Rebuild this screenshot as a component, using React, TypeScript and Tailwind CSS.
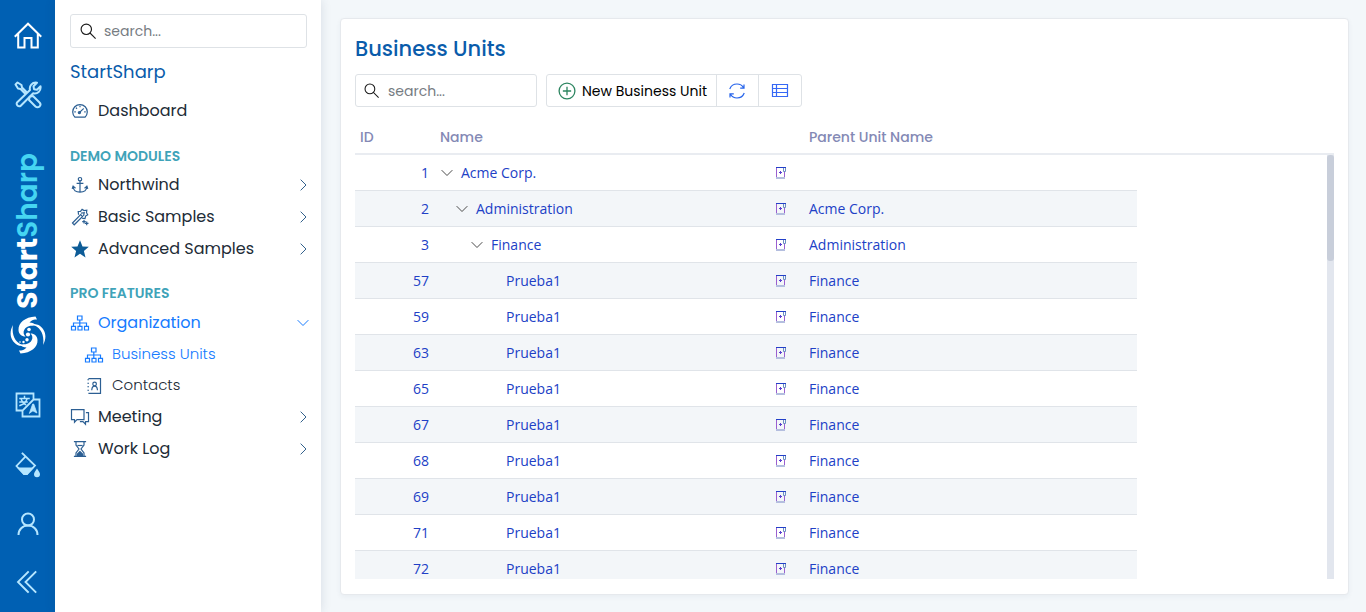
import type { ReactNode } from "react";

const line = {
  fill: "none",
  stroke: "currentColor",
  strokeLinecap: "square" as const,
  strokeLinejoin: "miter" as const,
};

type IconProps = { className?: string };

function HomeIcon({ className }: IconProps) {
  return (
    <svg viewBox="0 0 28 28" className={className} {...line} strokeWidth="2" aria-hidden="true">
      <path d="M1.5 15 14 2.700l12.500 12.300M4.200 13V26.500h6.300v-9.500h7v9.500h6.300V13" />
    </svg>
  );
}

function ToolsIcon({ className }: IconProps) {
  return (
    <svg viewBox="0 0 28 28" className={className} {...line} strokeWidth="2" strokeLinejoin="round" aria-hidden="true">
      <path d="M1.5 3.5 3.5 1.5 7.5 4 8 6.500 12.500 11 11 12.500 6.500 8 4 7.500z" />
      <path d="M16.500 15.500 19 15l6.500 6.500a2.700 2.700 0 0 1-4 4L15 19l.5-2.500" />
      <path d="M3 21.500 16 9c-1-4 2-8 7-7.300L19.500 5.200l.5 3 3 .5 3.500-3.500c.8 5-3.200 8-7.300 7L6.500 25A2.600 2.600 0 0 1 3 21.500z" />
    </svg>
  );
}

function TranslateIcon({ className }: IconProps) {
  return (
    <svg viewBox="0 0 26 26" className={className} {...line} strokeWidth="1.800" aria-hidden="true">
      <path d="M7.500 18.500H1.500v-17h17v6M18.500 7.500h6v17h-17v-6l11-11z" />
      <path d="M5 6.500h9M9.500 4.500v2M12 7c-1 3-3 5-7 6.500M6.500 8c1 2.500 2 3.500 4 4.500M5 10h7" strokeWidth="1.500" />
      <path d="m14.500 21 3.200-9h1l3.200 9-3.700-2z" fill="currentColor" strokeWidth=".8" />
    </svg>
  );
}

function PaintIcon({ className }: IconProps) {
  return (
    <svg viewBox="0 0 26 26" className={className} {...line} strokeWidth="1.800" aria-hidden="true">
      <path d="m7.500 1.500 12.500 12-8 8.500h-3L1.500 14 10.500 4.500" />
      <path d="M2 15.500h17l-7 7.500H9z" fill="currentColor" stroke="none" />
      <path d="M22 16.500c-2 3-3 4.300-3 5.800a3 3 0 0 0 6 0c0-1.500-1-2.800-3-5.800z" fill="currentColor" stroke="none" />
    </svg>
  );
}

function PersonIcon({ className }: IconProps) {
  return (
    <svg viewBox="0 0 24 24" className={className} {...line} strokeWidth="2" strokeLinecap="butt" aria-hidden="true">
      <circle cx="12" cy="7.500" r="6" />
      <path d="M2.500 23c0-5.500 4-9.500 9.500-9.500s9.500 4 9.500 9.500" />
    </svg>
  );
}

function CollapseIcon({ className }: IconProps) {
  return (
    <svg viewBox="0 0 24 24" className={className} {...line} strokeWidth="1.900" aria-hidden="true">
      <path d="M12 2 2 12l10 10M19.500 2l-10 10 10 10" />
    </svg>
  );
}

function SwirlLogo({ className }: IconProps) {
  return (
    <svg viewBox="0 0 36 38" className={className} fill="currentColor" aria-hidden="true">
      <path d="M25.500.5C15 1 8 7 8.500 14c.2 4 3 6.500 7 6.500-2-2-2.600-4.500-1-7C16.500 10 20 9.500 26.500 9.500c-2-2-4.500-3-7-3C21.500 4 24 3.500 27 3.500z" />
      <path d="M10.500 37.500c10.500-.5 17.500-6.500 17-13.500-.2-4-3-6.500-7-6.500 2 2 2.600 4.500 1 7-2 3.500-5.500 4-12 4 2 2 4.500 3 7 3-2 2.500-4.500 3-7.500 3z" />
      <path d="M3 9C-1.500 17 .5 25 7.500 29c2 1 4 1 6 .5C6 27 1.200 20 3 9zM33 29c4.500-8 2.500-16-4.500-20-2-1-4-1-6-.5C30 11 34.800 18 33 29z" />
      <circle cx="18" cy="18.500" r="2.100" />
      <circle cx="19" cy="13.500" r="1.800" />
      <circle cx="17" cy="23.800" r="1.700" />
      <circle cx="13.500" cy="26" r="1.200" />
      <circle cx="10" cy="26" r=".8" />
    </svg>
  );
}

function SearchIcon({ className }: IconProps) {
  return (
    <svg viewBox="0 0 16 16" className={className} {...line} strokeWidth="1.150" aria-hidden="true">
      <circle cx="6.300" cy="6.300" r="5.200" />
      <path d="m10.200 10.200 5 5" />
    </svg>
  );
}

function GaugeIcon() {
  return (
    <svg viewBox="0 0 18 18" className="size-[18px]" {...line} strokeWidth="1.200" aria-hidden="true">
      <path d="M4 15.200A7.300 7.300 0 1 1 14 15.200z" />
      <path d="m8.500 10.500 3.800-3.600M9 4.300v.4M5.300 6l.3.300M3.900 9.800h.3M13.800 9.800h.3" />
      <circle cx="8.400" cy="10.600" r="1.100" />
    </svg>
  );
}

function AnchorIcon() {
  return (
    <svg viewBox="0 0 18 18" className="size-[18px]" {...line} strokeWidth="1.200" aria-hidden="true">
      <circle cx="9" cy="3.200" r="1.700" />
      <path d="M9 5v11M6.200 7.400h5.600M2 10.500c.4 3.500 3 5.700 7 5.700s6.600-2.200 7-5.700M1.400 12.300 2.100 10.300l1.900 1.500M16.600 12.300l-.7-2-1.900 1.500" />
    </svg>
  );
}

function WandIcon() {
  return (
    <svg viewBox="0 0 18 18" className="size-[18px]" {...line} strokeWidth="1.200" aria-hidden="true">
      <path d="m1.500 15 8.200-8.400 1.900 1.900L3.200 16.800z" />
      <path d="M7.500 6.200 7.200 3.500l2.300-.2 1.600-1.900 2 1.200 2.700-.4-.3 2.500 1.200 2-2.100 1.400-.6 2.400-2.300-.2M10.500 5l2.700-.4-.5 2.800" />
      <path d="M13 12.500v2.400M11.800 13.700h2.400M15.700 14.200v2.400M14.500 15.400h2.400" />
    </svg>
  );
}

function StarIcon() {
  return (
    <svg viewBox="0 0 18 18" className="size-[18px]" fill="#0d5c97" aria-hidden="true">
      <path d="m9 .3 2.500 6.100 6.300.4-4.900 4.100 1.600 6.500L9 13.800l-5.500 3.600 1.600-6.500L.2 6.800l6.300-.4z" />
    </svg>
  );
}

function OrgIcon() {
  return (
    <svg viewBox="0 0 20 18" className="h-[18px] w-5" {...line} strokeWidth="1.200" aria-hidden="true">
      <path d="M7.500 2h4.500v4H7.500zM1.500 12.300h4v3.700h-4zM8 12.300h4v3.700H8zM14.500 12.300h4v3.700h-4zM9.800 6v6M3.500 12V9h13v3" />
    </svg>
  );
}

function ContactsIcon() {
  return (
    <svg viewBox="0 0 18 18" className="size-[18px]" {...line} strokeWidth="1.200" aria-hidden="true">
      <path d="M4 1.700h11.500v14.600H4" />
      <path d="M3.200 2.200v14" strokeDasharray="1 2.500" strokeWidth="1.600" strokeLinecap="butt" />
      <circle cx="9.600" cy="7" r="1.800" />
      <path d="M6.800 12.700c.2-2.400 1.200-3.600 2.800-3.600s2.600 1.200 2.800 3.600" />
    </svg>
  );
}

function ChatIcon() {
  return (
    <svg viewBox="0 0 20 18" className="h-[18px] w-5" {...line} strokeWidth="1.200" aria-hidden="true">
      <path d="M1.500 1.700h12.500v10H7l-2.500 2.500v-2.500h-3zM16.500 4.700h2v9h-3v2.500L13 13.700h-2.500" />
    </svg>
  );
}

function HourglassIcon() {
  return (
    <svg viewBox="0 0 18 18" className="size-[18px]" {...line} strokeWidth="1.200" aria-hidden="true">
      <path d="M3.500 1.600h11M3.500 16.400h11M5 2v3l3 4-3 4v3M13 2v3l-3 4 3 4v3" />
      <path d="M9 11.500 6.500 14v2h5v-2z" fill="currentColor" />
      <path d="M7 5.500h4" />
    </svg>
  );
}

function ChevronRight() {
  return (
    <svg viewBox="0 0 12 12" className="size-3 text-[#33618c]" {...line} strokeWidth="1" aria-hidden="true">
      <path d="m4 1 5 5-5 5" />
    </svg>
  );
}

function ChevronDown({ className }: IconProps) {
  return (
    <svg viewBox="0 0 12 12" className={className} {...line} strokeWidth="1" aria-hidden="true">
      <path d="m1 3.500 5 5 5-5" />
    </svg>
  );
}

function PlusCircleIcon() {
  return (
    <svg viewBox="0 0 18 18" className="size-[18px] text-[#2c8560]" {...line} strokeWidth="1.300" aria-hidden="true">
      <circle cx="9" cy="9" r="7.900" />
      <path d="M9 5.500v7M5.500 9h7" />
    </svg>
  );
}

function RefreshIcon() {
  return (
    <svg viewBox="0 0 18 18" className="size-[18px] text-[#2563eb]" {...line} strokeWidth="1.200" aria-hidden="true">
      <path d="M2 6.500C3.200 3.500 5.800 2 9 2c2.800 0 5.200 1.300 6.600 3.700M16 3v3.200h-3.200M16 11.500c-1.200 3-3.800 4.500-7 4.500-2.800 0-5.200-1.300-6.600-3.700M2 15v-3.200h3.200" />
    </svg>
  );
}

function TableIcon() {
  return (
    <svg viewBox="0 0 18 16" className="h-4 w-[18px] text-[#3568f5]" {...line} strokeWidth="1.200" aria-hidden="true">
      <path d="M1.500 1.500h15v12h-15zM1.500 5.500h15M1.500 9.500h15M5.500 1.500v12" />
    </svg>
  );
}

function AddChildIcon() {
  return (
    <svg viewBox="0 0 12 14" className="h-[14px] w-3" fill="none" strokeWidth="1" aria-hidden="true">
      <path d="M1.500 1.500v11M9.500 5v7.500" stroke="#9a5fd0" />
      <path d="M1 1.500h10" stroke="#2340c8" />
      <path d="M8.500 2v3.500h2V2" stroke="#6d8fc4" />
      <path d="M1 12h9" stroke="#b4bedf" strokeWidth="2" />
      <path d="M5.500 5v3M4 6.500h3" stroke="#5a3fd0" />
    </svg>
  );
}

type NavItemProps = {
  icon: ReactNode;
  label: string;
  arrow?: boolean;
  active?: boolean;
};

function NavItem({ icon, label, arrow, active }: NavItemProps) {
  return (
    <a
      href="#"
      className={`-mr-[2px] flex h-8 items-center gap-2 text-base ${active ? "text-[#167bff]" : "text-[#212b36]"}`}
    >
      <span className={`flex w-5 justify-center ${active ? "" : "text-[#2c5f93]"}`}>{icon}</span>
      <span className="flex-1 whitespace-nowrap">{label}</span>
      {arrow && (active ? <ChevronDown className="size-3" /> : <ChevronRight />)}
    </a>
  );
}

function SubItem({ icon, label, active }: NavItemProps) {
  return (
    <a
      href="#"
      className={`flex h-[31px] items-center gap-2 pl-[14px] text-[15px] font-light ${active ? "text-[#167bff]" : "text-[#212b36]"}`}
    >
      <span className={`flex w-5 justify-center ${active ? "" : "text-[#2c5f93]"}`}>{icon}</span>
      <span>{label}</span>
    </a>
  );
}

function Rail() {
  return (
    <nav
      aria-label="Main"
      className="flex w-[55px] shrink-0 flex-col items-center justify-between bg-[#0060b3] pt-[21px] pb-[18px] text-[#b5e6ff]"
    >
      <div className="flex flex-col items-center gap-8">
        <a href="#" aria-label="Home" className="text-white"><HomeIcon className="size-7" /></a>
        <a href="#" aria-label="Tools"><ToolsIcon className="size-7" /></a>
      </div>
      <a href="#" className="flex flex-col items-center gap-[7px] pt-[6px] text-white">
        <span className="rotate-180 text-[28px] leading-9 font-bold [writing-mode:vertical-rl]">
          Start<span className="font-semibold text-[#45d5f2]">Sharp</span>
        </span>
        <SwirlLogo className="h-[38px] w-9" />
      </a>
      <div className="flex flex-col items-center gap-[34px]">
        <button type="button" aria-label="Language"><TranslateIcon className="size-[26px]" /></button>
        <button type="button" aria-label="Theme"><PaintIcon className="size-[26px]" /></button>
        <button type="button" aria-label="Account"><PersonIcon className="size-6" /></button>
        <button type="button" aria-label="Collapse"><CollapseIcon className="size-6" /></button>
      </div>
    </nav>
  );
}

function Sidebar() {
  return (
    <aside className="z-10 flex w-[266px] shrink-0 flex-col bg-white pt-[14px] pr-[14px] pl-[15px] shadow-[0_0_10px_rgba(40,60,90,0.14)]">
      <label className="flex h-[34px] items-center gap-2 rounded-[3px] border border-[#dee2e6] px-[9px]">
        <SearchIcon className="size-4 shrink-0 text-[#1b1b1b]" />
        <input
          type="search"
          aria-label="Search menu"
          placeholder="search..."
          className="min-w-0 flex-1 text-sm outline-none placeholder:text-[#767c82]"
        />
      </label>
      <h2 className="mt-3 text-lg leading-6 text-[#0a5cab]">StartSharp</h2>
      <div className="mt-[11px]">
        <NavItem icon={<GaugeIcon />} label="Dashboard" />
      </div>
      <h3 className="mt-[19px] text-sm leading-5 font-semibold text-[#3fa3b9]">DEMO MODULES</h3>
      <div className="mt-[3px]">
        <NavItem icon={<AnchorIcon />} label="Northwind" arrow />
        <NavItem icon={<WandIcon />} label="Basic Samples" arrow />
        <NavItem icon={<StarIcon />} label="Advanced Samples" arrow />
      </div>
      <h3 className="mt-[18px] text-sm leading-5 font-semibold text-[#3fa3b9]">PRO FEATURES</h3>
      <div className="mt-1">
        <NavItem icon={<OrgIcon />} label="Organization" arrow active />
        <SubItem icon={<OrgIcon />} label="Business Units" active />
        <SubItem icon={<ContactsIcon />} label="Contacts" />
        <NavItem icon={<ChatIcon />} label="Meeting" arrow />
        <NavItem icon={<HourglassIcon />} label="Work Log" arrow />
      </div>
    </aside>
  );
}

type Unit = { id: number; name: string; parent: string; level: number; open?: boolean };

const units: Unit[] = [
  { id: 1, name: "Acme Corp.", parent: "", level: 0, open: true },
  { id: 2, name: "Administration", parent: "Acme Corp.", level: 1, open: true },
  { id: 3, name: "Finance", parent: "Administration", level: 2, open: true },
  ...[57, 59, 63, 65, 67, 68, 69, 71, 72].map((id) => ({ id, name: "Prueba1", parent: "Finance", level: 3 })),
];

const indents = ["pl-[6px]", "pl-[21px]", "pl-9", "pl-[51px]"];

function UnitsTable() {
  return (
    <div className="relative mt-[14px] min-h-0 flex-1 overflow-hidden">
      <table className="w-full table-fixed border-separate border-spacing-0 text-left">
        <colgroup>
          <col className="w-20" />
          <col className="w-[335px]" />
          <col className="w-[34px]" />
          <col className="w-[333px]" />
          <col />
        </colgroup>
        <thead>
          <tr className="h-[34px] text-sm leading-5 text-[#8489b5] [&>th]:border-b-2 [&>th]:border-[#e9ecf1] [&>th]:px-[5px] [&>th]:font-medium">
            <th scope="col">ID</th>
            <th scope="col" colSpan={2}>Name</th>
            <th scope="col">Parent Unit Name</th>
            <td className="border-b-2 border-[#e9ecf1]" />
          </tr>
        </thead>
        <tbody className="font-['Open_Sans',sans-serif] text-sm text-[#213fc6]">
          {units.map((u) => (
            <tr
              key={u.id}
              className="h-9 [&>td]:border-[#e0e4e9] [&>td:not(:last-child)]:border-b even:[&>td:not(:last-child)]:bg-[#f3f6f9]"
            >
              <td className="pr-[6px] text-right"><a href="#">{u.id}</a></td>
              <td className={indents[u.level]}>
                <div className="flex items-center gap-2">
                  <span className="flex w-3">
                    {u.open && (
                      <button type="button" aria-label={`Collapse ${u.name}`}>
                        <ChevronDown className="size-3 text-[#4a4a4a]" />
                      </button>
                    )}
                  </span>
                  <a href="#">{u.name}</a>
                </div>
              </td>
              <td className="pl-[5px]">
                <button type="button" aria-label={`Add unit under ${u.name}`} className="block">
                  <AddChildIcon />
                </button>
              </td>
              <td className="pl-[5px]"><a href="#">{u.parent}</a></td>
              <td />
            </tr>
          ))}
        </tbody>
      </table>
      <div className="absolute top-[34px] right-0 bottom-0 w-[7px] bg-[#e2e6ee]">
        <div className="h-1/4 rounded-[3px] bg-[#c8ceda]" />
      </div>
    </div>
  );
}

export default function App() {
  return (
    <div className="flex h-screen overflow-hidden bg-[#f3f7fa] font-[Poppins,Inter,sans-serif]">
      <Rail />
      <Sidebar />
      <main className="flex min-w-0 flex-1 py-[18px] pr-[17px] pb-[17px] pl-[19px]">
        <section className="flex min-w-0 flex-1 flex-col rounded-[4px] border border-[#e6e9ed] bg-white px-[14px] pt-[14px] pb-[15px] shadow-[0_2px_5px_rgba(40,60,90,0.05)]">
          <h1 className="text-[21px] leading-8 font-medium text-[#0a5cab]">Business Units</h1>
          <div className="mt-[9px] flex gap-[9px]">
            <label className="flex h-[33px] w-[182px] items-center gap-[9px] rounded-[3px] border border-[#dee2e6] px-2">
              <SearchIcon className="size-[15px] shrink-0 text-[#1b1b1b]" />
              <input
                type="search"
                aria-label="Search business units"
                placeholder="search..."
                className="min-w-0 flex-1 text-sm outline-none placeholder:text-[#767c82]"
              />
            </label>
            <div className="flex h-[33px] divide-x divide-[#dee2e6] rounded-[3px] border border-[#dee2e6] text-sm text-black">
              <button type="button" className="flex items-center gap-[6px] pr-[9px] pl-[11px] whitespace-nowrap">
                <PlusCircleIcon />
                New Business Unit
              </button>
              <button type="button" aria-label="Refresh" className="flex w-[42px] items-center justify-center">
                <RefreshIcon />
              </button>
              <button type="button" aria-label="Choose columns" className="flex w-[42px] items-center justify-center">
                <TableIcon />
              </button>
            </div>
          </div>
          <UnitsTable />
        </section>
      </main>
    </div>
  );
}
